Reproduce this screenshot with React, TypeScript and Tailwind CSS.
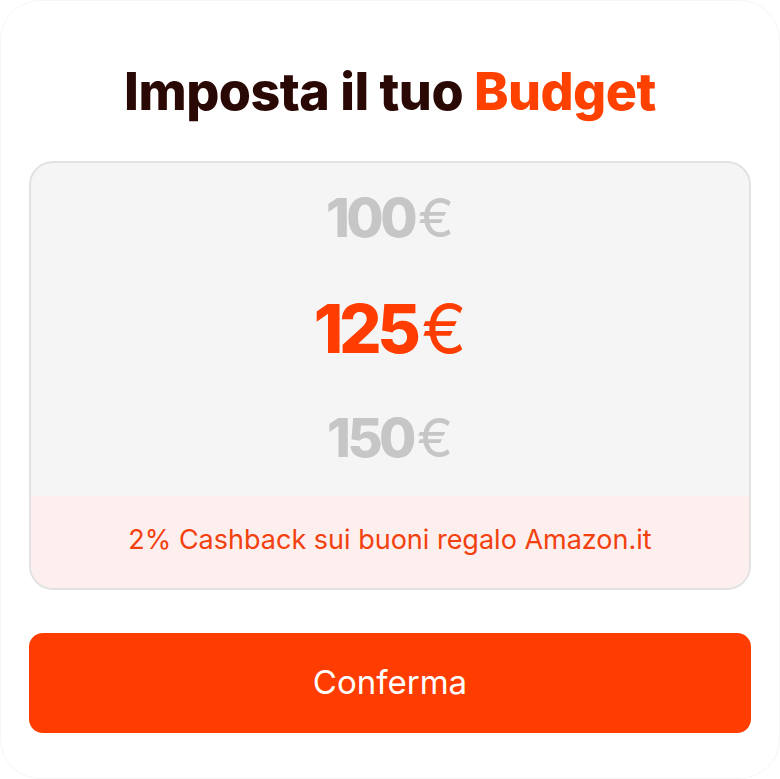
import { useState } from "react";

const amounts = [100, 125, 150];

export default function App() {
  const [selected, setSelected] = useState(125);

  return (
    <div
      className="w-[780px] h-[779px] bg-white"
      style={{ fontFamily: "Inter, 'Noto Sans', sans-serif" }}
    >
      <div className="flex h-full flex-col rounded-[40px] border border-[#f6f6f6] bg-white px-[28px]">
        {/* Heading */}
        <h1 className="mt-[59px] h-[64px] text-center text-[52px] font-extrabold leading-[64px] tracking-[-0.01em] text-[#2a0803]">
          Imposta il tuo <span className="text-[#ff4100]">Budget</span>
        </h1>

        {/* Budget picker */}
        <div className="mt-[37px] overflow-hidden rounded-[24px] border-2 border-[#e2e2e2] bg-[#f5f5f5]">
          <div className="flex h-[333px] flex-col">
            {amounts.map((value) => {
              const active = value === selected;
              return (
                <button
                  key={value}
                  onClick={() => setSelected(value)}
                  className={
                    active
                      ? "flex h-[110px] items-center justify-center gap-[5px] text-[67px] leading-none text-[#ff3d00]"
                      : "flex h-[110px] items-center justify-center gap-[4px] text-[54px] leading-none text-[#c6c6c6]"
                  }
                >
                  <span className="font-extrabold tracking-[-0.065em]">{value}</span>
                  <span className="font-normal">€</span>
                </button>
              );
            })}
          </div>
          <div className="flex h-[92px] items-center justify-center pb-[4px] bg-[#fdefee] text-[27px] text-[#f2410f]">
            2% Cashback sui buoni regalo Amazon.it
          </div>
        </div>

        {/* Confirm */}
        <button className="mt-[43px] h-[100px] w-full rounded-[14px] bg-[#ff3d00] text-[33px] text-white">
          Conferma
        </button>
      </div>
    </div>
  );
}
